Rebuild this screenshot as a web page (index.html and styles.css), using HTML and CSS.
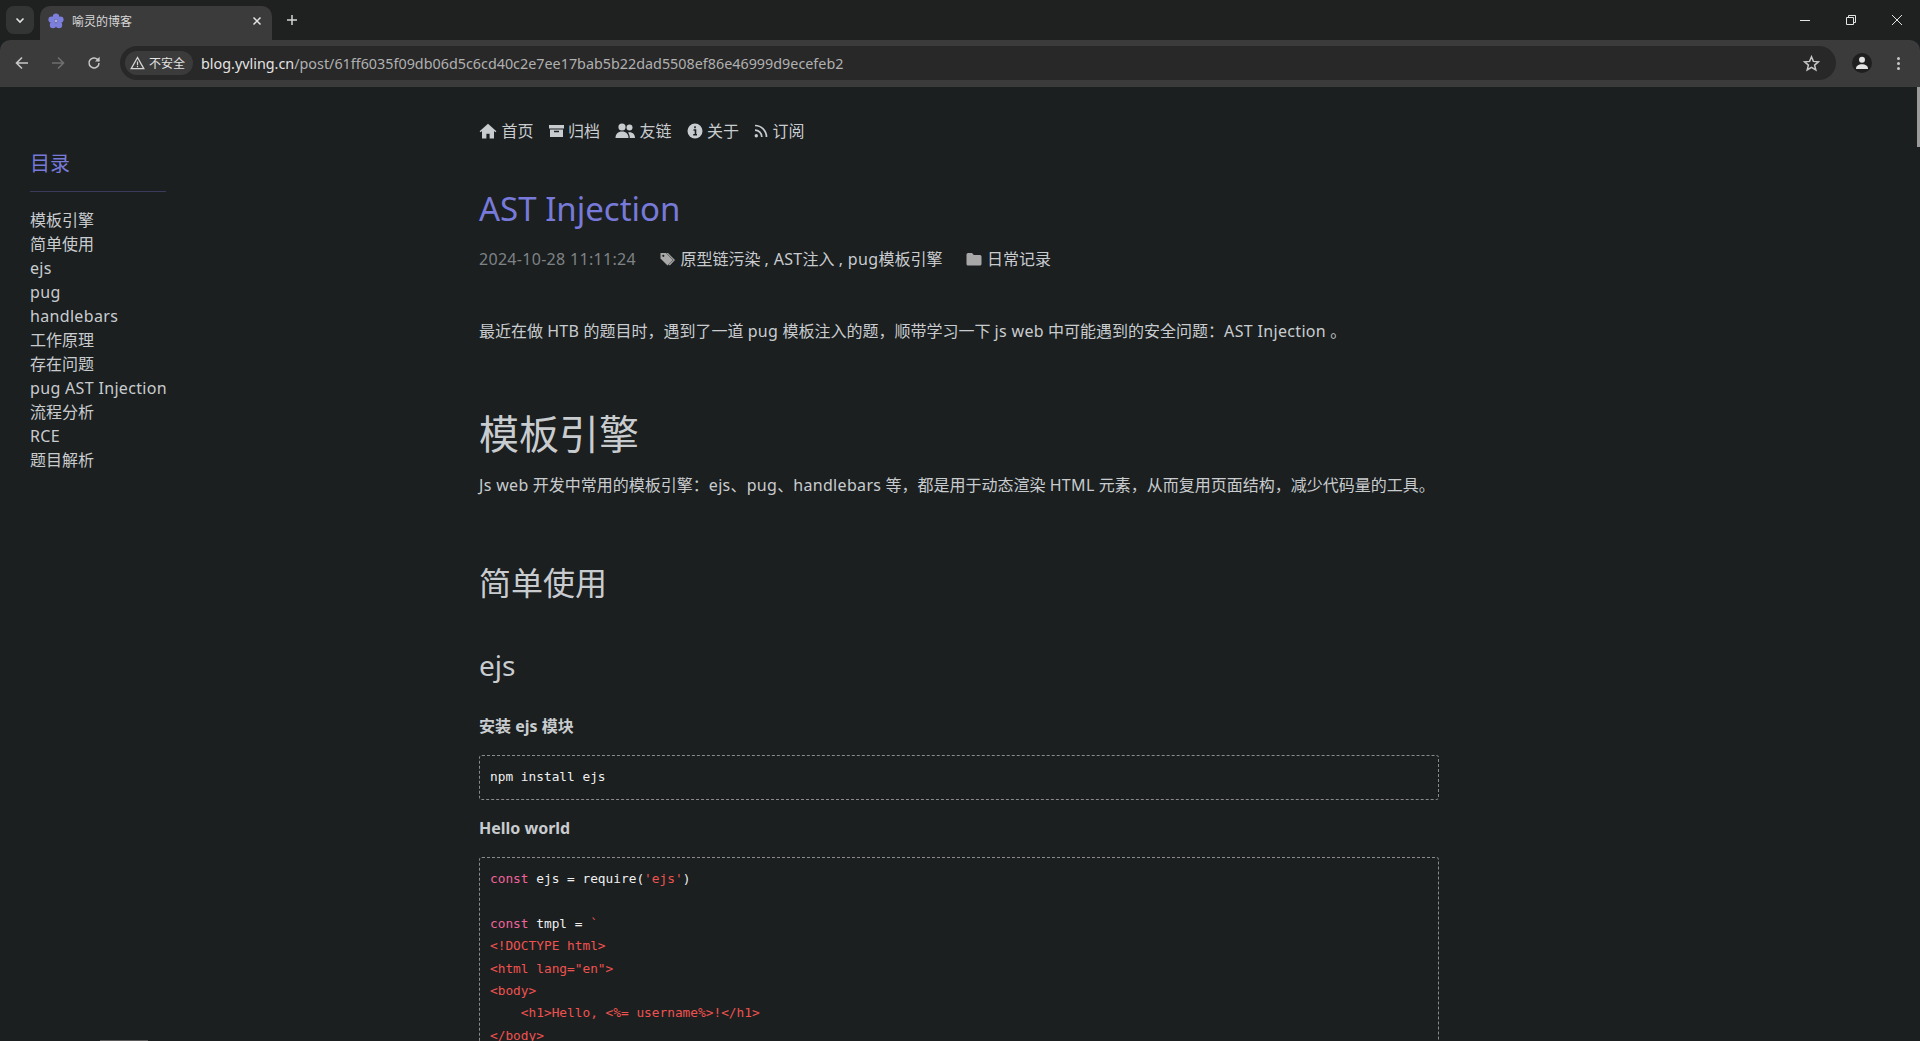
FILE: index.html
```html
<!DOCTYPE html>
<html lang="zh-CN">
<head>
    <meta charset="UTF-8">
    <meta name="viewport" content="width=device-width, initial-scale=1.0">
    <title>喻灵的博客</title>
    <link rel="stylesheet" href="styles.css">
</head>
<body>
<div class="window">
    <div class="tabstrip">
        <div class="tab-search">
            <svg width="12" height="12" viewBox="0 0 12 12"><path d="M2.500 4.500 6 8l3.500-3.500" fill="none" stroke="#e3e3e3" stroke-width="1.600"/></svg>
        </div>
        <div class="tab">
            <svg class="favicon" width="16" height="16" viewBox="0 0 16 16">
                <g fill="#7c7fdc">
                    <circle cx="8" cy="3.600" r="3.200"/>
                    <circle cx="3.600" cy="6.600" r="3.200"/>
                    <circle cx="12.400" cy="6.600" r="3.200"/>
                    <circle cx="5" cy="12" r="3.200"/>
                    <circle cx="11" cy="12" r="3.200"/>
                </g>
                <circle cx="8" cy="8" r="1.600" fill="#a9abee"/>
            </svg>
            <span class="tab-title">喻灵的博客</span>
            <svg class="tab-close" width="10" height="10" viewBox="0 0 10 10"><path d="M1.500 1.500l7 7M8.500 1.500l-7 7" stroke="#e3e3e3" stroke-width="1.500"/></svg>
        </div>
        <svg class="new-tab" width="12" height="12" viewBox="0 0 12 12"><path d="M6 1v10M1 6h10" stroke="#d5d5d5" stroke-width="1.500"/></svg>
        <div class="win-buttons">
            <svg width="12" height="12" viewBox="0 0 12 12"><path d="M1 6.500h10" stroke="#e3e3e3" stroke-width="1"/></svg>
            <svg width="12" height="12" viewBox="0 0 12 12"><path d="M1.500 3.500h7v7h-7zM3.500 3.500v-2h7v7h-2" fill="none" stroke="#e3e3e3" stroke-width="1"/></svg>
            <svg width="12" height="12" viewBox="0 0 12 12"><path d="M1 1l10 10M11 1L1 11" stroke="#e3e3e3" stroke-width="1"/></svg>
        </div>
    </div>
    <div class="toolbar">
        <svg class="nav-icon" width="16" height="16" viewBox="0 0 16 16"><path d="M14 8H3M8 2.500 2.500 8 8 13.500" fill="none" stroke="#c7c7c7" stroke-width="1.600"/></svg>
        <svg class="nav-icon" width="16" height="16" viewBox="0 0 16 16"><path d="M2 8h11M8 2.500 13.500 8 8 13.500" fill="none" stroke="#6f6f6f" stroke-width="1.600"/></svg>
        <svg class="nav-icon" width="16" height="16" viewBox="0 0 16 16"><path d="M13 8a5 5 0 1 1-1.500-3.600L13 6" fill="none" stroke="#c7c7c7" stroke-width="1.500"/><path d="M13.600 1.800v4.600H9z" fill="#c7c7c7"/></svg>
        <div class="omnibox">
            <div class="security">
                <svg width="15" height="14" viewBox="0 0 15 14"><path d="M7.500 1.500 1.200 12.600h12.600z" fill="none" stroke="#d5d5d5" stroke-width="1.300"/><path d="M7.500 5.400v3.800M7.500 10v1.300" stroke="#d5d5d5" stroke-width="1.200"/></svg>
                <span>不安全</span>
            </div>
            <div class="url"><span class="host">blog.yvling.cn</span>/post/61ff6035f09db06d5c6cd40c2e7ee17bab5b22dad5508ef86e46999d9ecefeb2</div>
            <svg class="star" width="17" height="17" viewBox="0 0 17 17"><path d="M8.500 1.800 10.400 6.400l5 .4-3.800 3.300 1.200 4.900-4.300-2.600-4.300 2.600 1.200-4.900L1.600 6.800l5-.4z" fill="none" stroke="#c7c7c7" stroke-width="1.500"/></svg>
        </div>
        <div class="avatar">
            <svg width="14" height="14" viewBox="0 0 14 14"><circle cx="7" cy="3.800" r="3" fill="#e3e3e3"/><path d="M1 13c0-3.200 2.500-4.700 6-4.700s6 1.500 6 4.700z" fill="#e3e3e3"/></svg>
        </div>
        <div class="menu-dots"><i></i><i></i><i></i></div>
    </div>
    <div class="page">
        <aside class="toc">
            <div class="toc-title">目录</div>
            <hr class="toc-line">
            <ul class="toc-list">
                <li>模板引擎</li>
                <li>简单使用</li>
                <li class="lat">ejs</li>
                <li class="lat">pug</li>
                <li class="lat">handlebars</li>
                <li>工作原理</li>
                <li>存在问题</li>
                <li class="lat">pug AST Injection</li>
                <li>流程分析</li>
                <li class="lat">RCE</li>
                <li>题目解析</li>
            </ul>
        </aside>
        <main class="post">
            <nav class="site-nav">
                <a><svg class="ico" width="18" height="16" viewBox="0 0 18 16"><path d="M9 .8 .6 8.200l1 1.100L3 8.100V15.500h4.400v-4.800h3.200v4.800H15V8.100l1.400 1.200 1-1.100z" fill="currentColor"/></svg>首页</a>
                <a><svg class="ico" width="15" height="14" viewBox="0 0 15 14"><path d="M0 1h15v3.500H0zM1 5.500h13V13H1z" fill="currentColor"/><path d="M5 7.500h5" stroke="#1b1f20" stroke-width="1.500"/></svg>归档</a>
                <a><svg class="ico" width="20" height="16" viewBox="0 0 20 16"><circle cx="7" cy="4" r="3.600" fill="currentColor"/><circle cx="14.500" cy="4.500" r="3" fill="currentColor"/><path d="M.5 15c0-4 2.500-6.500 6.500-6.500s6.500 2.500 6.500 6.500z" fill="currentColor"/><path d="M14.800 15H20c0-3.500-2-5.800-5.500-5.800-.6 0-1 .1-1.400.2 1 1.400 1.700 3.200 1.700 5.600z" fill="currentColor"/></svg>友链</a>
                <a><svg class="ico" width="16" height="16" viewBox="0 0 16 16"><circle cx="8" cy="8" r="7.500" fill="currentColor"/><path d="M8 3.200v2M6.500 7h2v4.200M6.200 11.800h3.800" fill="none" stroke="#1b1f20" stroke-width="1.600"/></svg>关于</a>
                <a><svg class="ico" width="14" height="14" viewBox="0 0 14 14"><circle cx="2.300" cy="11.700" r="1.700" fill="currentColor"/><path d="M1 6.200A6.800 6.800 0 0 1 7.800 13M1 1.500A11.500 11.500 0 0 1 12.500 13" fill="none" stroke="currentColor" stroke-width="1.700"/></svg>订阅</a>
            </nav>
            <h1 class="post-title">AST Injection</h1>
            <div class="post-meta">
                <span class="date">2024-10-28 11:11:24</span>
                <span class="meta-item"><svg class="ico" width="16" height="14" viewBox="0 0 16 14"><path d="M.5 1v5.500L7.500 13.500 13 8 6 1z" fill="currentColor"/><path d="M8 1l7 7-5.200 5.500-1-1L13.500 8l-7-7z" fill="currentColor"/><circle cx="3.300" cy="3.800" r="1.100" fill="#1b1f20"/></svg><span>原型链污染 <span class="lat">, AST</span>注入 <span class="lat">, pug</span>模板引擎</span></span>
                <span class="meta-item"><svg class="ico" width="16" height="14" viewBox="0 0 16 14"><path d="M.5 2.500A1.500 1.500 0 0 1 2 1h4l1.800 2H14a1.500 1.500 0 0 1 1.500 1.500V12a1.500 1.500 0 0 1-1.500 1.500H2A1.500 1.500 0 0 1 .5 12z" fill="currentColor"/></svg>日常记录</span>
            </div>
            <p class="intro">最近在做 <span class="lat">HTB</span> 的题目时，遇到了一道 <span class="lat">pug</span> 模板注入的题，顺带学习一下 <span class="lat">js web</span> 中可能遇到的安全问题：<span class="lat">AST Injection</span> 。</p>
            <h1 class="h-one">模板引擎</h1>
            <p class="lead"><span class="lat">Js web</span> 开发中常用的模板引擎：<span class="lat">ejs</span>、<span class="lat">pug</span>、<span class="lat">handlebars</span> 等，都是用于动态渲染 <span class="lat">HTML</span> 元素，从而复用页面结构，减少代码量的工具。</p>
            <h2 class="h-two">简单使用</h2>
            <h3 class="h-three">ejs</h3>
            <h4 class="h-four">安装 ejs 模块</h4>
            <pre class="code"><code>npm install ejs</code></pre>
            <h4 class="h-four second">Hello world</h4>
            <pre class="code"><code><span class="kw">const</span> ejs = require(<span class="str">'ejs'</span>)

<span class="kw">const</span> tmpl = <span class="str">`</span>
<span class="str">&lt;!DOCTYPE html&gt;</span>
<span class="str">&lt;html lang="en"&gt;</span>
<span class="str">&lt;body&gt;</span>
<span class="str">    &lt;h1&gt;Hello, &lt;%= username%&gt;!&lt;/h1&gt;</span>
<span class="str">&lt;/body&gt;</span></code></pre>
        </main>
    </div>
    <div class="scroll-thumb"></div>
    <div class="bottom-mark"></div>
</div>
</body>
</html>
```
FILE: styles.css
```css
html, body {
    margin: 0;
    height: 100%;
    overflow: hidden;
    background-color: #1b1f20;
}
.window {
    position: relative;
    height: 100vh;
    overflow: hidden;
    display: flex;
    flex-direction: column;
    font-family: "Noto Sans", "Noto Sans CJK SC", sans-serif;
}
.lat {
    letter-spacing: .33px;
}

/* browser frame */
.tabstrip {
    flex: none;
    height: 40px;
    display: flex;
    align-items: flex-end;
    background-color: #1f2020;
}
.tab-search {
    width: 28px;
    height: 28px;
    margin: 0 6px 6px 6px;
    border-radius: 8px;
    background-color: #333434;
    display: flex;
    align-items: center;
    justify-content: center;
}
.tab {
    width: 232px;
    height: 34px;
    box-sizing: border-box;
    padding: 0 10px 5px 8px;
    border-radius: 10px 10px 0 0;
    background-color: #3b3b3b;
    display: flex;
    align-items: center;
}
.tab-title {
    flex: 1;
    margin-left: 8px;
    font-size: 12px;
    color: #d8d8d8;
}
.new-tab {
    margin: 0 0 14px 14px;
}
.win-buttons {
    margin-left: auto;
    align-self: flex-start;
    display: flex;
    gap: 34px;
    padding: 14px 17px 0 0;
}
.toolbar {
    flex: none;
    height: 46px;
    padding-bottom: 1px;
    display: flex;
    align-items: center;
    background-color: #3b3b3b;
    border-radius: 10px 10px 0 0;
}
.nav-icon {
    margin-left: 14px;
    flex: none;
}
.nav-icon + .nav-icon {
    margin-left: 20px;
}
.omnibox {
    flex: 1;
    height: 34px;
    margin-left: 18px;
    padding: 0 3px 0 5px;
    border-radius: 17px;
    background-color: #282828;
    display: flex;
    align-items: center;
}
.security {
    height: 24px;
    padding: 0 8px 0 5px;
    border-radius: 12px;
    background-color: #3b3b3b;
    display: flex;
    align-items: center;
    gap: 4px;
    font-size: 12px;
    color: #e3e3e3;
}
.url {
    flex: 1;
    margin-left: 8px;
    font-size: 14.350px;
    color: #b0b0b0;
}
.host {
    color: #e3e3e3;
}
.star {
    margin-right: 13px;
}
.avatar {
    width: 20px;
    height: 20px;
    margin-left: 16px;
    border-radius: 50%;
    background-color: #1f1f1f;
    display: flex;
    align-items: center;
    justify-content: center;
}
.menu-dots {
    width: 36px;
    display: flex;
    flex-direction: column;
    align-items: center;
    gap: 2px;
    margin: 0 4px 0 8px;
}
.menu-dots i {
    width: 3px;
    height: 3px;
    border-radius: 50%;
    background-color: #c7c7c7;
}
.scroll-thumb {
    position: absolute;
    right: 0;
    top: 87px;
    width: 3px;
    height: 60px;
    background-color: #9a9a9a;
}
.bottom-mark {
    position: absolute;
    left: 100px;
    bottom: 0;
    width: 48px;
    height: 1px;
    background-color: #5a5a5a;
}

/* blog page */
.page {
    flex: 1;
    min-height: 0;
    display: flex;
    color: #c9cccf;
    font-size: 16px;
}
.toc {
    width: 449px;
    flex: none;
    padding: 63px 0 0 30px;
}
.toc-title {
    font-size: 20px;
    line-height: 28px;
    color: #777ad9;
}
.toc-line {
    width: 136px;
    height: 1px;
    margin: 13px 0 16px 0;
    border: 0;
    background-color: #3a3b5c;
}
.toc-list {
    list-style: none;
    margin: 0;
    padding: 0;
    line-height: 24px;
    white-space: nowrap;
}
.post {
    width: 960px;
    flex: none;
    padding-top: 32px;
}
.site-nav {
    display: flex;
    gap: 15px;
    height: 24px;
    line-height: 24px;
}
.site-nav a {
    display: flex;
    align-items: center;
}
.ico {
    margin-right: 4.500px;
    flex: none;
}
.post-title {
    margin: 43px 0 0 0;
    font-size: 33px;
    line-height: 46px;
    font-weight: 400;
    color: #777ad9;
}
.post-meta {
    margin-top: 15px;
    display: flex;
    gap: 24px;
    line-height: 24px;
}
.date {
    letter-spacing: .3px;
    color: #7f8386;
}
.meta-item {
    display: flex;
    align-items: center;
}
.meta-item .ico {
    color: #a8a8a8;
}
.intro {
    margin: 48px 0 0 0;
    line-height: 24px;
}
.h-one {
    margin: 63px 0 0 0;
    font-size: 40px;
    line-height: 56px;
    font-weight: 400;
}
.lead {
    margin: 11px 0 0 0;
    line-height: 24px;
}
.h-two {
    margin: 64px 0 0 0;
    font-size: 32px;
    line-height: 44px;
    font-weight: 400;
}
.h-three {
    margin: 40px 0 0 0;
    font-size: 28px;
    line-height: 40px;
    font-weight: 400;
}
.h-four {
    margin: 29px 0 0 0;
    font-size: 16px;
    line-height: 24px;
    font-weight: 700;
}
.h-four.second {
    margin-top: 16px;
}
.code {
    margin: 17px 0 0 0;
    padding: 9.500px 10px 11.500px 10px;
    border: 1px dashed #8a8a8a;
    border-radius: 3px;
    font-family: "DejaVu Sans Mono", monospace;
    font-size: 12.800px;
    line-height: 22.400px;
    color: #f0f0f0;
}
.code code {
    font-family: inherit;
}
.kw {
    color: #f0639a;
}
.str {
    color: #f0524f;
}
```
